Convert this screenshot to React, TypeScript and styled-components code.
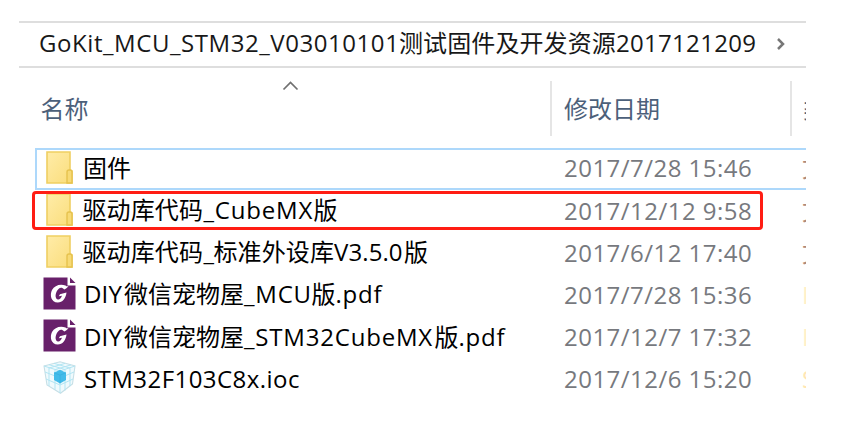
import React from "react";
import styled, { createGlobalStyle } from "styled-components";

const GlobalStyle = createGlobalStyle`
  * { box-sizing: border-box; }
  body {
    margin: 0;
    background: #fff;
    font-family: "Open Sans", "Noto Sans CJK SC", sans-serif;
    font-size: 24px;
    color: #1c1c1c;
  }
`;

const Page = styled.main`
  width: 863px;
  height: 431px;
  padding: 21px 57px 0 19px;
  overflow: hidden;
  background: #fff;
`;

const Explorer = styled.section`
  width: 787px;
  height: 400px;
  overflow: hidden;
`;

const AddressBar = styled.header`
  display: flex;
  align-items: center;
  height: 47px;
  padding: 0 0 4px 20px;
  border-top: 2px solid #dedede;
  border-bottom: 2px solid #dedede;
  color: #181818;
`;

const PathChevron = styled.svg`
  width: 12px;
  height: 14px;
  margin: 3px 0 0 19px;
  flex: none;
`;

const HeaderRow = styled.div`
  position: relative;
  display: grid;
  grid-template-columns: 533px 240px 1fr;
  height: 55px;
  margin-top: 13px;
  color: #4c607a;
`;

const HeaderCell = styled.div<{ $pad: number; $divider?: boolean }>`
  display: flex;
  align-items: center;
  padding-left: ${(p) => p.$pad}px;
  border-right: ${(p) => (p.$divider ? "2px solid #e5e5e5" : "0")};
  line-height: 30px;
  white-space: nowrap;
  overflow: hidden;
`;

const SortArrow = styled.svg`
  position: absolute;
  left: 263px;
  top: -1px;
  width: 17px;
  height: 11px;
`;

const FileList = styled.div`
  position: relative;
  margin-top: 12px;
`;

const FileRow = styled.div<{ $focused?: boolean }>`
  display: grid;
  grid-template-columns: 514px 239px 1fr;
  height: 42.15px;
  margin-left: 16px;
  box-shadow: ${(p) => (p.$focused ? "inset 2px 2px #add8fb, inset 0 -2px #add8fb" : "none")};
`;

const NameCell = styled.div`
  display: flex;
  align-items: center;
  height: 38px;
  min-width: 0;
`;

const IconSlot = styled.span`
  display: flex;
  justify-content: center;
  width: 33px;
  margin-left: 8px;
  flex: none;
`;

const FileName = styled.div<{ $pad: number }>`
  display: flex;
  margin-left: ${(p) => p.$pad}px;
  padding-top: 2px;
  line-height: 40px;
  white-space: nowrap;
  color: #000;
`;

const PathText = styled.div`
  display: flex;
  line-height: 40px;
  white-space: nowrap;
`;

const Run = styled.span<{ $width: number; $track: number }>`
  width: ${(p) => p.$width}px;
  letter-spacing: ${(p) => p.$track}px;
  flex: none;
`;

const DateCell = styled.div<{ $track: number }>`
  padding: 0.4px 0 0 15px;
  line-height: 40px;
  letter-spacing: ${(p) => p.$track}px;
  white-space: nowrap;
  color: #77797e;
`;

const TypeCell = styled.div<{ $tint: string }>`
  padding: 0.4px 0 0 14px;
  line-height: 40px;
  overflow: hidden;
  white-space: nowrap;
  color: ${(p) => p.$tint};
`;

const Highlight = styled.div`
  position: absolute;
  left: 13px;
  top: 43px;
  width: 731px;
  height: 39px;
  border: 3px solid #ff1d13;
  border-radius: 4px;
`;

const Icon = styled.svg`
  display: block;
  flex: none;
`;

const FolderIcon = () => (
  <Icon width="27" height="33" viewBox="0 0 27 33">
    <defs>
      <linearGradient id="folder" x1="0" y1="0" x2="1" y2="1">
        <stop offset="0" stopColor="#ffeca8" />
        <stop offset="1" stopColor="#fadd7b" />
      </linearGradient>
    </defs>
    <path d="M1 1h23v18l2 1v12H1z" fill="url(#folder)" stroke="#efcf62" strokeWidth="1.6" />
    <path d="M21 32V21q0-2 2-2h1q2 0 2 2v11z" fill="#f7da76" stroke="#e6c24e" strokeWidth="1.4" />
  </Icon>
);

const PdfIcon = () => (
  <Icon width="33" height="33" viewBox="0 0 33 33">
    <path d="M.5.5h24v8h8v24H.5z" fill="#68206a" />
    <path d="M27 .5v5.500h5.500z" fill="#68206a" />
    <path
      d="M22.500 8.500C17 6.500 11.500 8.500 9 13C6.500 18 8 25.500 14.800 25.500C19.500 25.500 22.800 21.500 23.500 15.500L17 17.300L15.800 19.300L19 18.800C18 21.500 16.500 22.900 14.800 22.500C11.300 21.500 12.300 15 15.500 12C17.500 10.200 19.500 10.600 21.200 12.600C22.500 12 24.300 10.700 25.500 9.200C24.500 9.500 23.500 9.400 22.500 8.500Z"
      fill="#fff"
    />
  </Icon>
);

const CubeIcon = () => (
  <Icon width="33" height="33" viewBox="0 0 33 33">
    <path d="M1 5L17 .8L32 5L29.500 23L17.500 32.300L4 24z" fill="#f0fafd" stroke="#c6dfe6" strokeWidth="1.1" />
    <path
      d="M1 5l16 5l15-5M17 10v22M6 3.700l16 4.800v21M11 2.300l16 4.800v18M28 3.900l-16 4.700v20M22 2.400L6 7v18M2 11l15 6l14-6M3 18l14 6l13-6"
      fill="none"
      stroke="#b2e5f3"
      strokeWidth="1"
    />
    <path d="M17 8.700l6 3v7.200l-6 3.700l-6-3.700v-7.200z" fill="#42bbe9" />
    <path d="M11 11.700l6 2.500l6-2.500M17 14.200v8" fill="none" stroke="#35b0df" strokeWidth=".8" />
  </Icon>
);

type Segment = [text: string, width: number, track: number];

interface Entry {
  icon: "folder" | "pdf" | "cube";
  pad: number;
  name: Segment[];
  date: string;
  type: string;
  tint: string;
}

const icons = { folder: FolderIcon, pdf: PdfIcon, cube: CubeIcon };

const path: Segment[] = [
  ["GoKit_MCU_STM32_V03010101", 360, 0.56],
  ["测试固件及开发资源", 217, 0.1],
  ["2017121209", 140, 0.3],
];

const entries: Entry[] = [
  { icon: "folder", pad: 7, name: [["固件", 48, 0]], date: "2017/7/28 15:46", type: "文件夹", tint: "#b08a78" },
  {
    icon: "folder",
    pad: 6.5,
    name: [["驱动库代码", 121, 0.1], ["_CubeMX", 110, 0.8], ["版", 24, 0]],
    date: "2017/12/12 9:58",
    type: "文件夹",
    tint: "#b08a78",
  },
  {
    icon: "folder",
    pad: 6.5,
    name: [["驱动库代码", 121, 0.1], ["_", 10, 0], ["标准外设库", 120.5, 0.1], ["V3.5.0", 70, 0.1], ["版", 24, 0]],
    date: "2017/6/12 17:40",
    type: "文件夹",
    tint: "#b08a78",
  },
  {
    icon: "pdf",
    pad: 8,
    name: [["DIY", 40, 0.2], ["微信宠物屋", 120, 0], ["_MCU", 67.5, 0.8], ["版", 24, 0], [".pdf", 48, 0.8]],
    date: "2017/7/28 15:36",
    type: "Foxit",
    tint: "#fff0c8",
  },
  {
    icon: "pdf",
    pad: 8,
    name: [["DIY", 40, 0.2], ["微信宠物屋", 120, 0], ["_STM32CubeMX", 190.5, 0.8], ["版", 24, 0], [".pdf", 48, 0.8]],
    date: "2017/12/7 17:32",
    type: "Foxit",
    tint: "#fff0c8",
  },
  {
    icon: "cube",
    pad: 8,
    name: [["STM32F103C8x.ioc", 216, 0.45]],
    date: "2017/12/6 15:20",
    type: "STM32CubeMX",
    tint: "#ffe7b4",
  },
];

const Segments = ({ items }: { items: Segment[] }) => (
  <>
    {items.map(([text, width, track], i) => (
      <Run key={i} $width={width} $track={track}>
        {text}
      </Run>
    ))}
  </>
);

export default function App() {
  return (
    <Page>
      <GlobalStyle />
      <Explorer>
        <AddressBar>
          <PathText>
            <Segments items={path} />
          </PathText>
          <PathChevron viewBox="0 0 12 14">
            <path d="M3 2l5 5l-5 5" fill="none" stroke="#777" strokeWidth="2.500" />
          </PathChevron>
        </AddressBar>
        <HeaderRow>
          <HeaderCell $pad={21.5} $divider>
            名称
          </HeaderCell>
          <HeaderCell $pad={12} $divider>
            修改日期
          </HeaderCell>
          <HeaderCell $pad={11}>类型</HeaderCell>
          <SortArrow viewBox="0 0 17 11">
            <path d="M1.500 9.500l7-7l7 7" fill="none" stroke="#707070" strokeWidth="1.700" />
          </SortArrow>
        </HeaderRow>
        <FileList>
          {entries.map((entry, i) => {
            const EntryIcon = icons[entry.icon];
            return (
              <FileRow key={i} $focused={i === 0}>
                <NameCell>
                  <IconSlot>
                    <EntryIcon />
                  </IconSlot>
                  <FileName $pad={entry.pad}>
                    <Segments items={entry.name} />
                  </FileName>
                </NameCell>
                <DateCell $track={0.47}>{entry.date}</DateCell>
                <TypeCell $tint={entry.tint}>{entry.type}</TypeCell>
              </FileRow>
            );
          })}
          <Highlight />
        </FileList>
      </Explorer>
    </Page>
  );
}
